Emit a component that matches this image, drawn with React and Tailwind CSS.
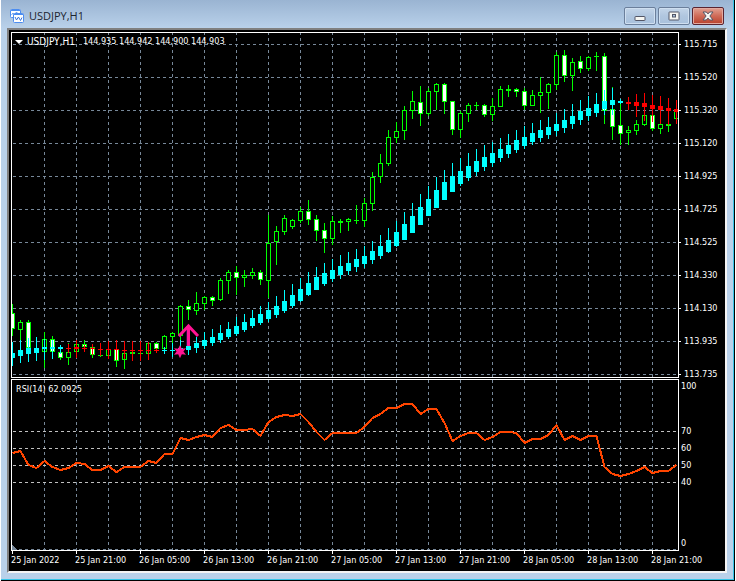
import React from 'react';

const STEP = 8;
const TOP = 33;
const RSI_TOP = 380;

// [high, body top, body bottom, low, falling]
const candles = [
    [304, 313, 329, 336, 1], [320, 322, 330, 350, 0], [320, 322, 348, 354, 1], [346, 350, 353, 354, 0],
    [332, 339, 352, 368, 0], [336, 339, 352, 354, 1], [350, 352, 358, 360, 1], [343, 352, 358, 365, 0],
    [341, 344, 352, 354, 0], [340, 344, 347, 350, 1], [346, 347, 355, 358, 1], [350, 355, 356, 357, 0],
    [346, 349, 356, 359, 0], [346, 349, 361, 367, 1], [350, 353, 360, 369, 0], [350, 352, 354, 356, 1],
    [350, 353, 354, 356, 0], [342, 343, 354, 355, 0], [342, 343, 349, 350, 1], [335, 336, 349, 351, 0],
    [332, 333, 337, 348, 0], [305, 306, 336, 340, 0], [300, 306, 310, 320, 1], [292, 303, 311, 315, 0],
    [296, 297, 304, 310, 0], [296, 297, 301, 306, 1], [278, 280, 300, 301, 0], [270, 272, 281, 294, 0],
    [266, 272, 278, 295, 1], [270, 275, 278, 287, 0], [268, 272, 276, 279, 0], [270, 272, 280, 285, 1],
    [215, 243, 281, 298, 0], [226, 231, 242, 265, 0], [215, 218, 232, 235, 0], [219, 220, 227, 229, 0],
    [207, 211, 221, 223, 0], [200, 211, 220, 225, 1], [215, 219, 231, 241, 1], [223, 230, 239, 253, 1],
    [216, 221, 239, 245, 0], [219, 221, 223, 233, 0], [218, 219, 222, 231, 0], [205, 220, 221, 224, 0],
    [198, 203, 221, 227, 0], [172, 177, 204, 211, 0], [154, 163, 177, 183, 0], [130, 137, 164, 166, 0],
    [122, 131, 138, 143, 0], [106, 110, 131, 140, 0], [91, 101, 111, 119, 0], [86, 102, 114, 126, 1],
    [88, 91, 114, 116, 0], [83, 84, 92, 110, 0], [83, 84, 102, 114, 1], [101, 101, 130, 135, 1],
    [111, 113, 130, 138, 0], [103, 105, 114, 122, 0], [102, 105, 106, 110, 0], [104, 105, 115, 117, 1],
    [98, 106, 115, 121, 0], [86, 89, 107, 107, 0], [85, 89, 91, 97, 0], [88, 89, 92, 97, 1],
    [88, 91, 106, 110, 1], [90, 95, 106, 106, 0], [77, 92, 96, 113, 0], [83, 84, 93, 109, 0],
    [52, 55, 85, 90, 0], [50, 55, 76, 82, 1], [58, 62, 76, 91, 0], [56, 61, 69, 73, 1],
    [56, 57, 69, 71, 0], [52, 56, 57, 71, 0], [53, 56, 111, 124, 1], [87, 109, 127, 140, 1],
    [103, 125, 134, 145, 1], [126, 130, 133, 145, 0], [120, 124, 131, 135, 0], [113, 115, 125, 126, 0],
    [113, 115, 129, 131, 1], [123, 124, 129, 134, 0], [124, 124, 126, 132, 0], [111, 111, 119, 120, 0],
];

// [high, body top, body bottom, low, bearish]
const trend = [
    [342, 353, 358, 366, 0], [340, 350, 356, 363, 0], [338, 348, 354, 362, 0], [337, 348, 353, 361, 0],
    [339, 347, 349, 360, 0], [340, 347, 349, 359, 0], [345, 347, 349, 354, 0], [344, 348, 349, 353, 1],
    [340, 347, 349, 358, 1], [345, 348, 349, 352, 1], [344, 348, 349, 355, 1], [343, 349, 350, 356, 1],
    [341, 349, 350, 359, 1], [340, 349, 350, 360, 1], [341, 350, 351, 359, 1], [341, 350, 351, 361, 1],
    [341, 350, 351, 361, 1], [342, 350, 351, 360, 1], [348, 350, 351, 353, 1], [347, 350, 351, 354, 0],
    [343, 350, 351, 357, 0], [340, 348, 350, 356, 0], [338, 346, 350, 355, 0], [337, 343, 348, 353, 0],
    [332, 340, 346, 349, 0], [329, 337, 343, 346, 0], [325, 333, 340, 343, 0], [322, 329, 337, 339, 0],
    [317, 326, 334, 336, 0], [314, 322, 330, 332, 0], [310, 318, 326, 328, 0], [306, 314, 323, 325, 0],
    [302, 310, 319, 322, 0], [296, 306, 315, 318, 0], [290, 301, 311, 313, 0], [284, 295, 306, 308, 0],
    [278, 289, 301, 302, 0], [272, 283, 295, 296, 0], [267, 277, 290, 290, 0], [263, 273, 284, 286, 0],
    [259, 270, 279, 282, 0], [255, 266, 275, 279, 0], [252, 263, 271, 275, 0], [249, 259, 267, 272, 0],
    [246, 256, 264, 268, 0], [241, 251, 260, 264, 0], [235, 246, 256, 259, 0], [228, 240, 252, 253, 0],
    [221, 232, 246, 247, 0], [212, 224, 240, 240, 0], [203, 216, 233, 233, 0], [194, 207, 225, 225, 0],
    [186, 199, 216, 216, 0], [177, 190, 208, 208, 0], [170, 182, 200, 200, 0], [163, 176, 192, 192, 0],
    [158, 171, 184, 186, 0], [153, 166, 178, 181, 0], [149, 161, 172, 176, 0], [145, 157, 167, 171, 0],
    [142, 153, 163, 167, 0], [138, 149, 158, 162, 0], [134, 145, 154, 158, 0], [130, 140, 150, 153, 0],
    [126, 137, 146, 149, 0], [123, 133, 142, 145, 0], [120, 130, 138, 142, 0], [117, 127, 135, 139, 0],
    [113, 124, 131, 136, 0], [109, 120, 128, 133, 0], [104, 116, 124, 129, 0], [100, 111, 120, 125, 0],
    [96, 108, 116, 121, 0], [93, 104, 113, 117, 0], [90, 101, 109, 115, 0], [88, 100, 105, 115, 0],
    [99, 101, 103, 104, 0], [97, 102, 104, 110, 1], [94, 102, 106, 117, 1], [93, 103, 107, 121, 1],
    [95, 105, 109, 122, 1], [96, 106, 110, 124, 1], [98, 108, 111, 125, 1], [100, 109, 112, 124, 1],
];

const rsi = [
    453, 451, 465, 468, 461, 467, 470, 468, 463, 464, 470, 470, 466, 472, 467, 467, 467, 461, 463, 454, 454,
    438, 440, 437, 435, 437, 428, 425, 430, 430, 429, 436, 422, 417, 415, 416, 414, 422, 432, 440, 433, 433,
    433, 433, 427, 418, 414, 408, 408, 404, 404, 414, 409, 409, 423, 441, 436, 433, 433, 440, 437, 432, 432,
    433, 443, 439, 439, 435, 425, 440, 436, 440, 436, 436, 467, 474, 476, 474, 471, 467, 473, 471, 471, 465,
];

const prices = [
    '115.715', '115.520', '115.320', '115.120', '114.925', '114.725',
    '114.525', '114.330', '114.130', '113.935', '113.735',
];

const times = [
    '25 Jan 2022', '25 Jan 21:00', '26 Jan 05:00', '26 Jan 13:00', '26 Jan 21:00', '27 Jan 05:00',
    '27 Jan 13:00', '27 Jan 21:00', '28 Jan 05:00', '28 Jan 13:00', '28 Jan 21:00',
];

const columns = Array.from({ length: 60 }, (_, i) => 32 * (i + 1));

const VerticalGrid = ({ offset }) => (
    <g stroke="#778899" strokeDasharray="3 3" strokeDashoffset={offset}>
        {columns.map((x) => (
            <line key={x} x1={x + 0.5} x2={x + 0.5} y1="0" y2="100%" />
        ))}
    </g>
);

const Candle = ({ x, data }) => {
    const [high, top, bottom, low, falling] = data;
    const height = bottom - top;
    return (
        <g>
            <rect x={x} y={high} width="1" height={low - high} fill="#00ff00" />
            <rect x={x - 2} y={top} width="5" height={height} fill="#00ff00" />
            {height > 2 && (
                <rect x={x - 1} y={top + 1} width="3" height={height - 2} fill={falling ? '#ffffff' : '#000000'} />
            )}
        </g>
    );
};

const TrendBar = ({ x, data }) => {
    const [high, top, bottom, low, bearish] = data;
    return (
        <g fill={bearish ? '#ff0000' : '#00ffff'}>
            <rect x={x} y={high} width="1" height={low - high} />
            <rect x={x - 2} y={top} width="5" height={bottom - top} />
        </g>
    );
};

const PriceChart = () => (
    <svg className="block w-full h-[344px]" shapeRendering="crispEdges" role="img" aria-label="USDJPY H1 candles">
        <VerticalGrid offset={1} />
        <g stroke="#778899" strokeDasharray="3 3" strokeDashoffset="5">
            {prices.map((price, i) => (
                <line key={price} x1="0" x2="100%" y1={33 * i + 11.5} y2={33 * i + 11.5} />
            ))}
        </g>
        <g transform={`translate(0 ${-TOP})`}>
            {candles.map((data, i) => <Candle key={i} x={i * STEP} data={data} />)}
            {trend.map((data, i) => <TrendBar key={i} x={i * STEP} data={data} />)}
            {/* Buy signal */}
            <g shapeRendering="auto">
                <path d="M175.5 346V327M167 336.5L176 326.5" fill="none" stroke="#6a0d8a" strokeWidth="2" />
                <path d="M176.5 346V326M167 336L176.5 326L186 336" fill="none" stroke="#ff1493" strokeWidth="3" />
                <path d="M168 345l1.800 3.800 4.200-.6-2.600 3.300 2.600 3.300-4.200-.6-1.800 4-1.800-4-4.200.6 2.600-3.300-2.600-3.300 4.200.6z" fill="#ff1493" />
            </g>
        </g>
    </svg>
);

const RsiChart = () => (
    <svg className="block w-full h-[170px]" shapeRendering="crispEdges" role="img" aria-label="RSI 14">
        <VerticalGrid offset={0} />
        <line x1="0" x2="100%" y1="169.5" y2="169.5" stroke="#778899" strokeDasharray="3 3" strokeDashoffset="5" />
        <g stroke="#c0c0c0" strokeDasharray="3 3" strokeDashoffset="5">
            {[51, 68, 85, 102].map((y) => (
                <line key={y} x1="0" x2="100%" y1={y + 0.5} y2={y + 0.5} />
            ))}
        </g>
        <path d="M0 165l5 5H0z" fill="#778899" />
        <polyline
            points={rsi.map((y, i) => `${i * STEP + 0.5},${y - RSI_TOP}`).join(' ')}
            fill="none"
            stroke="#ff4500"
            strokeWidth="2"
            strokeLinejoin="round"
        />
    </svg>
);

const ChartIcon = () => (
    <svg width="14" height="14" viewBox="0 0 14 14" fill="none" aria-hidden="true">
        <rect x="0.5" y="0.5" width="10" height="8" rx="1" fill="#ffffff" stroke="#4c8df0" />
        <path d="M1 1.5h9" stroke="#4c8df0" />
        <path d="M1.5 6l1.500-2 1.500 2 2-3 1.500 2" stroke="#4c8df0" strokeWidth="0.8" />
        <rect x="3.5" y="4.5" width="10" height="9" rx="1" fill="#ffffff" stroke="#4c8df0" />
        <path d="M4 5.5h9" stroke="#4c8df0" />
        <path d="M5 8l1.500 3 2-3 2 3.500 1.500-3" stroke="#3a76dd" />
    </svg>
);

const WindowButton = ({ label, danger, children }) => (
    <button
        type="button"
        aria-label={label}
        className={
            danger
                ? 'w-8 h-[18px] flex items-center justify-center rounded-[2px] border border-[#5a2430] bg-linear-to-b from-[#e0a193] via-[#cf6a57] via-50% to-[#b8402c] shadow-[inset_0_0_0_1px_#e3aaa0]'
                : 'w-8 h-[18px] flex items-center justify-center rounded-[2px] border border-[#6b7f9b] bg-linear-to-b from-[#c3d5e9] via-[#b0c6df] via-50% to-[#a9c1dc] shadow-[inset_0_0_0_1px_#cfdff0]'
        }
    >
        {children}
    </button>
);

const TitleBar = () => (
    <header className="h-7 flex items-start justify-between pl-[9px] pr-[9px] bg-linear-to-b from-[#9ab4d2] to-[#b9d1ea]">
        <div className="flex items-center gap-[5px] pt-2">
            <ChartIcon />
            <h1 className="font-['Open_Sans',sans-serif] text-[11px] leading-4 text-[#1c2430]">USDJPY,H1</h1>
        </div>
        <div className="flex gap-[2px] pt-[7px]">
            <WindowButton label="Minimize">
                <svg width="12" height="12" viewBox="0 0 12 12" aria-hidden="true">
                    <rect x="1" y="6.500" width="10" height="4" rx="0.500" fill="#f6f6f2" stroke="#535666" />
                </svg>
            </WindowButton>
            <WindowButton label="Maximize">
                <svg width="12" height="10" viewBox="0 0 12 10" aria-hidden="true">
                    <rect x="1" y="1" width="10" height="8" rx="0.500" fill="#f6f6f2" stroke="#535666" />
                    <rect x="4.500" y="3.500" width="3" height="2.500" fill="#a9c1dc" stroke="#535666" />
                </svg>
            </WindowButton>
            <WindowButton label="Close" danger>
                <svg width="12" height="10" viewBox="0 0 12 10" aria-hidden="true">
                    <path
                        d="M1 1h3.300L6 2.900 7.700 1H11L7.900 5 11 9H7.700L6 7.100 4.300 9H1l3.100-4z"
                        fill="#f6f6f2"
                        stroke="#535666"
                        strokeLinejoin="round"
                    />
                </svg>
            </WindowButton>
        </div>
    </header>
);

const PriceAxis = () => (
    <ul className="w-[46px] h-[346px] shrink-0 flex flex-col gap-[22px] pt-[7px]">
        {prices.map((price) => (
            <li key={price} className="flex items-center gap-[3px] h-[11px] shrink-0 leading-[11px]">
                <span className="w-[2px] h-px bg-white"></span>
                {price}
            </li>
        ))}
    </ul>
);

const RsiAxis = () => (
    <ul className="w-[46px] shrink-0 pl-[2px] pt-[2px] leading-[11px]">
        <li className="mb-[34px]">100</li>
        <li className="mb-[6px]">70</li>
        <li className="mb-[6px]">60</li>
        <li className="mb-[6px]">50</li>
        <li className="mb-[50px]">40</li>
        <li>0</li>
    </ul>
);

const TimeAxis = () => (
    <ul className="flex h-5 overflow-hidden">
        {times.map((time) => (
            <li key={time} className="w-16 shrink-0 whitespace-nowrap">
                <span className="block w-px h-[3px] ml-px bg-white"></span>
                <span className="block leading-[13px]">{time}</span>
            </li>
        ))}
    </ul>
);

export default function App() {
    return (
        <div className="min-h-screen flex flex-col px-px bg-white">
            <div className="flex-1 flex flex-col border-r border-b border-black">
                <div className="flex-1 flex flex-col border-r border-b border-[#35c5e8] bg-[#b9d1ea]">
                    <TitleBar />
                    <main className="flex-1 flex flex-col ml-[6px] mr-[6px] mb-[6px] border-2 border-t-[#808080] border-l-[#808080] border-r-[#f4f4f4] border-b-[#f4f4f4] bg-black text-white font-['DejaVu_Sans_Condensed','DejaVu_Sans',sans-serif] text-[9px]">
                        <div className="pl-[2px] pt-[2px]">
                            <section className="flex">
                                <div className="relative flex-1 min-w-0 border border-white">
                                    <PriceChart />
                                    <div className="absolute left-[3px] top-[3px] flex items-center gap-1 leading-[11px] whitespace-nowrap">
                                        <svg width="8" height="4" viewBox="0 0 8 4" aria-hidden="true">
                                            <path d="M0 0h8L4 4z" fill="#ffffff" />
                                        </svg>
                                        <span className="text-[10px]">USDJPY,H1</span>
                                        <span className="ml-1">144.935 144.942 144.900 144.903</span>
                                    </div>
                                </div>
                                <PriceAxis />
                            </section>
                            <section className="flex mt-px">
                                <div className="relative flex-1 min-w-0 border border-white">
                                    <RsiChart />
                                    <span className="absolute left-1 top-1 leading-[11px]">RSI(14) 62.0925</span>
                                </div>
                                <RsiAxis />
                            </section>
                            <TimeAxis />
                        </div>
                    </main>
                </div>
            </div>
        </div>
    );
}
